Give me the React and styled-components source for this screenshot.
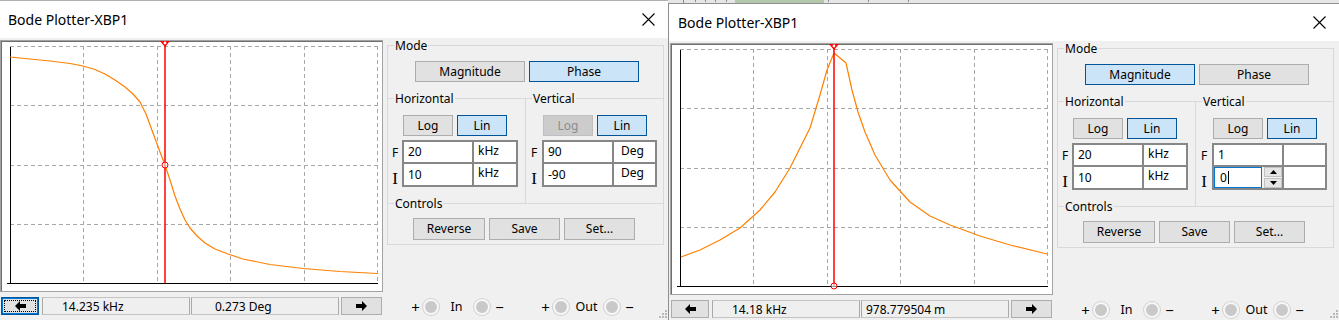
import React from "react";
import styled, { createGlobalStyle } from "styled-components";

const GlobalStyle = createGlobalStyle`
  html, body { margin: 0; padding: 0; background: #ffffff; }
  body { font-family: "Noto Sans", "DejaVu Sans", sans-serif; color: #000; }
  * { box-sizing: border-box; }
`;

const Screen = styled.div`
  display: flex;
  width: 1339px;
  height: 320px;
  overflow: hidden;
  background: #ffffff;
`;

const WindowSlot = styled.div`
  flex: none;
  display: flex;
  flex-direction: column;
  width: ${(p) => p.$w}px;
  height: 320px;
  margin-left: ${(p) => p.$ml || 0}px;
`;

const BackStrip = styled.svg`
  display: block;
  flex: none;
`;

const Window = styled.div`
  position: relative;
  flex: 1;
  display: flex;
  flex-direction: column;
  background: #f0f0f0;
  border-top: 1px solid ${(p) => p.$edge};
  border-left: 1px solid ${(p) => p.$edge};
  overflow: hidden;
`;

const TitleBar = styled.div`
  flex: none;
  height: 37px;
  display: flex;
  align-items: center;
  justify-content: space-between;
  padding: 0 13px 0 9px;
  background: #ffffff;
`;

const Title = styled.span`
  font-size: 14px;
  line-height: 1;
  color: #000;
`;

const Body = styled.div`
  flex: 1;
  display: flex;
  align-items: flex-start;
  padding: 2px 0 0 1px;
`;

const LeftCol = styled.div`
  flex: none;
  width: 383px;
  display: flex;
  flex-direction: column;
`;

const PlotFrame = styled.div`
  width: 383px;
  height: 252px;
  background: #ffffff;
  border: 1px solid #a3a3a3;
  box-shadow: inset 1px 1px 0 #6f6f6f;
`;

const PlotSvg = styled.svg`
  display: block;
`;

const StatusBar = styled.div`
  display: flex;
  height: 18px;
  margin-top: 5px;
  padding-left: 1px;
`;

const StatusField = styled.div`
  width: 148px;
  height: 18px;
  margin-left: ${(p) => p.$ml}px;
  padding-left: ${(p) => p.$pl}px;
  display: flex;
  align-items: center;
  font-size: 12px;
  background: #efefef;
  border: 1px solid #c4c4c4;
  border-left-color: #a9a9a9;
  border-right-color: #a9a9a9;
`;

const Btn = styled.button`
  flex: none;
  width: ${(p) => p.$w}px;
  height: ${(p) => p.$h || 21}px;
  margin: 0 0 0 ${(p) => p.$ml || 0}px;
  padding: 0 0 1px 0;
  display: flex;
  align-items: center;
  justify-content: center;
  font-family: "Noto Sans", "DejaVu Sans", sans-serif;
  font-size: 12px;
  color: ${(p) => (p.$state === "disabled" ? "#8c8c8c" : "#000")};
  background: ${(p) =>
    p.$state === "active" ? "#cce4f7" : p.$state === "disabled" ? "#cccccc" : "#e1e1e1"};
  border: 1px solid
    ${(p) =>
      p.$state === "active" || p.$state === "focus"
        ? "#005499"
        : p.$state === "disabled"
        ? "#bfbfbf"
        : "#adadad"};
  box-shadow: ${(p) => (p.$state === "focus" ? "inset 0 0 0 1px #0078d7" : "none")};
  outline: ${(p) => (p.$state === "focus" ? "1px dotted #000" : "none")};
  outline-offset: -4px;
`;

const RightPanel = styled.div`
  flex: none;
  width: 277px;
  margin-left: 4px;
  padding-top: 5px;
  display: flex;
  flex-direction: column;
`;

const Group = styled.div`
  flex: none;
  width: ${(p) => (p.$w ? `${p.$w}px` : "auto")};
  border-top: 1px solid #d9d9d9;
  border-right: 1px solid #d9d9d9;
  border-left: ${(p) => (p.$noLeft ? "none" : "1px solid #d9d9d9")};
  border-bottom: ${(p) => (p.$bottom ? "1px solid #d9d9d9" : "none")};
  padding-bottom: ${(p) => p.$pb}px;
`;

const Caption = styled.div`
  width: fit-content;
  margin: -8px 0 0 6px;
  padding: 0 1px;
  background: #f0f0f0;
  font-size: 12px;
  line-height: 16px;
`;

const ButtonRow = styled.div`
  display: flex;
  gap: ${(p) => p.$gap || 4}px;
  margin: ${(p) => p.$mt}px 0 0 ${(p) => p.$ml}px;
`;

const HVRow = styled.div`
  display: flex;
`;

const FieldsRow = styled.div`
  display: flex;
  margin-top: 4px;
`;

const LabelCol = styled.div`
  width: ${(p) => p.$w}px;
  display: grid;
  grid-template-rows: 24px 23px;
`;

const FLabel = styled.span`
  display: flex;
  align-items: center;
  justify-content: center;
  font-size: 12px;
`;

const ILabel = styled.span`
  display: flex;
  align-items: flex-end;
  justify-content: center;
  font-family: "Liberation Serif", "DejaVu Serif", serif;
  font-size: 17px;
  line-height: 1;
  padding-bottom: 0;
`;

const FieldGrid = styled.div`
  display: grid;
  grid-template-columns: 68px ${(p) => p.$unit}px;
  grid-template-rows: 20px 21px;
  gap: 2px;
  padding: 2px;
  background: #878787;
`;

const Cell = styled.div`
  background: #ffffff;
  display: flex;
  align-items: ${(p) => (p.$unitCell ? "flex-start" : "center")};
  padding: ${(p) => (p.$unitCell ? "1px" : "0")} 0 0 ${(p) => p.$pl || 4}px;
  font-size: 12px;
  line-height: 16px;
`;

const SpinCell = styled.div`
  display: flex;
  gap: 2px;
  background: #f4f4f4;
`;

const FocusBox = styled.div`
  width: 48px;
  display: flex;
  align-items: center;
  padding-left: 5px;
  background: #ffffff;
  border: 1px solid #0078d7;
  font-size: 12px;
`;

const Caret = styled.span`
  display: inline-block;
  width: 1px;
  height: 13px;
  margin-left: 1px;
  background: #000;
`;

const Spinner = styled.div`
  width: 18px;
  display: flex;
  flex-direction: column;
  gap: 1px;
`;

const SpinBtn = styled.div`
  flex: 1;
  display: flex;
  align-items: center;
  justify-content: center;
  background: #e5e5e5;
  border: 1px solid #c2c2c2;
`;

const TerminalBar = styled.div`
  display: flex;
  align-items: center;
  height: 16px;
  margin-top: 54px;
  padding-left: 24px;
  gap: 37px;
`;

const TermGroup = styled.div`
  display: flex;
  align-items: center;
`;

const Sign = styled.span`
  width: 9px;
  font-size: 15px;
  line-height: 16px;
  text-align: center;
  margin-left: ${(p) => p.$ml || 0}px;
`;

const Dot = styled.span`
  width: 16px;
  height: 16px;
  margin-left: ${(p) => p.$ml || 0}px;
  border-radius: 50%;
  background: #c9c9c9;
  border: 2px solid #f7f7f7;
  box-shadow: 0 0 0 1px #d2d2d2;
`;

const TermLabel = styled.span`
  width: 35px;
  text-align: center;
  font-size: 12.5px;
  line-height: 16px;
`;

const Grip = styled.svg`
  position: absolute;
  right: 1px;
  bottom: 2px;
`;

const CloseIcon = () => (
  <svg width="13" height="13" viewBox="0 0 13 13">
    <path d="M0.5 0.5 L12.5 12.5 M12.5 0.5 L0.5 12.5" stroke="#000" strokeWidth="1.1" />
  </svg>
);

const ArrowIcon = ({ dir }) => (
  <svg width="11" height="10" viewBox="0 0 11 10">
    <path
      d={
        dir === "left"
          ? "M0 5 L5 0 L5 3 L11 3 L11 7 L5 7 L5 10 Z"
          : "M11 5 L6 0 L6 3 L0 3 L0 7 L6 7 L6 10 Z"
      }
      fill="#000"
    />
  </svg>
);

const Tri = ({ up }) => (
  <svg width="7" height="4" viewBox="0 0 7 4">
    <path d={up ? "M0 4 L3.5 0 L7 4 Z" : "M0 0 L7 0 L3.5 4 Z"} fill="#000" />
  </svg>
);

const GripIcon = () => (
  <Grip width="8" height="8" viewBox="0 0 8 8">
    {[
      [6, 0],
      [6, 3],
      [3, 3],
      [6, 6],
      [3, 6],
      [0, 6],
    ].map(([x, y], i) => (
      <rect key={i} x={x} y={y} width="2" height="2" fill="#b8b8b8" />
    ))}
  </Grip>
);

const GX0 = 9;
const GX1 = 376;
const GY0 = 5;
const GY1 = 242;

function Plot({ curve, offset, cursorX, markerY }) {
  const [ox, oy] = offset;
  const pts = curve.map(([x, y]) => `${x - ox},${y - oy}`).join(" ");
  const cols = [1, 2, 3, 4, 5].map((i) => Math.round(GX0 + (i * (GX1 - GX0)) / 5) + 0.5);
  const rows = [0, 1, 2, 3].map((i) => Math.round(GY0 + (i * (GY1 - GY0)) / 4) + 0.5);
  const cx = cursorX - ox;
  const my = markerY - oy;
  return (
    <PlotSvg width="381" height="250" viewBox="0 0 381 250">
      <g stroke="#a8a8a8" strokeWidth="1" strokeDasharray="4 3" shapeRendering="crispEdges">
        {cols.map((x) => (
          <line key={`c${x}`} x1={x} y1={GY0} x2={x} y2={GY1} />
        ))}
        {rows.map((y) => (
          <line key={`r${y}`} x1={GX0} y1={y} x2={GX1} y2={y} />
        ))}
      </g>
      <g stroke="#000" strokeWidth="1" shapeRendering="crispEdges">
        <line x1={GX0 + 0.5} y1={GY0 + 1} x2={GX0 + 0.5} y2={GY1 + 1} />
        <line x1={GX0 - 3} y1={GY1 + 0.5} x2={GX1 + 1} y2={GY1 + 0.5} />
      </g>
      <polyline points={pts} fill="none" stroke="#ff8000" strokeWidth="1.2" strokeLinejoin="round" />
      <line x1={cx} y1={0} x2={cx} y2={GY1} stroke="#ff0000" strokeWidth="1.5" />
      <path d={`M${cx - 5} 0 L${cx + 5} 0 L${cx} 6 Z`} fill="#ff0000" />
      <circle cx={cx} cy={2} r="1.4" fill="#ffffff" />
      <circle cx={cx} cy={my} r="3" fill="#ffffff" fillOpacity="0.6" stroke="#ff0000" strokeWidth="1" />
    </PlotSvg>
  );
}

const LEFT_CURVE = [
  [10, 57], [30, 59], [50, 61], [70, 63.5], [83, 66], [95, 69.5], [105, 74], [115, 80],
  [125, 87], [133, 94], [140, 102], [146, 114], [153, 133], [160, 152], [165, 165],
  [170, 180], [175, 196], [180, 209], [185, 220], [190, 228], [197, 236], [205, 243],
  [215, 249], [228, 254], [243, 259], [270, 264.5], [303, 268.5], [340, 271.5], [377, 273.5],
];

const RIGHT_CURVE = [
  [681, 257], [700, 250], [720, 240], [740, 228], [760, 210], [775, 192], [790, 168],
  [800, 148], [810, 128], [820, 95], [827, 70], [834, 53], [840, 58], [846, 63],
  [852, 90], [858, 112], [865, 132], [875, 155], [890, 180], [910, 202], [930, 216],
  [950, 225], [980, 236], [1010, 245], [1047, 254],
];

function Terminal({ label }) {
  return (
    <TermGroup>
      <Sign>+</Sign>
      <Dot $ml={3} />
      <TermLabel>{label}</TermLabel>
      <Dot />
      <Sign $ml={5}>−</Sign>
    </TermGroup>
  );
}

function BodePlotter({ data }) {
  return (
    <Window $edge={data.edge}>
      <TitleBar>
        <Title>Bode Plotter-XBP1</Title>
        <CloseIcon />
      </TitleBar>
      <Body>
        <LeftCol>
          <PlotFrame>
            <Plot curve={data.curve} offset={data.offset} cursorX={data.cursorX} markerY={data.markerY} />
          </PlotFrame>
          <StatusBar>
            <Btn $w={38} $h={18} $state={data.leftFocus ? "focus" : "normal"}>
              <ArrowIcon dir="left" />
            </Btn>
            <StatusField $ml={3} $pl={data.status[0].pl}>{data.status[0].text}</StatusField>
            <StatusField $ml={1} $pl={data.status[1].pl}>{data.status[1].text}</StatusField>
            <Btn $w={41} $h={18} $ml={2}>
              <ArrowIcon dir="right" />
            </Btn>
          </StatusBar>
        </LeftCol>
        <RightPanel>
          <Group $pb={16}>
            <Caption>Mode</Caption>
            <ButtonRow $mt={7} $ml={27}>
              <Btn $w={110} $state={data.mode === "mag" ? "active" : "normal"}>Magnitude</Btn>
              <Btn $w={110} $state={data.mode === "phase" ? "active" : "normal"}>Phase</Btn>
            </ButtonRow>
          </Group>
          <HVRow>
            <Group $w={139} $pb={16}>
              <Caption>Horizontal</Caption>
              <ButtonRow $mt={8} $ml={15}>
                <Btn $w={50}>Log</Btn>
                <Btn $w={50} $state="active">Lin</Btn>
              </ButtonRow>
              <FieldsRow>
                <LabelCol $w={14}>
                  <FLabel>F</FLabel>
                  <ILabel>I</ILabel>
                </LabelCol>
                <FieldGrid $unit={42}>
                  <Cell>20</Cell>
                  <Cell $unitCell>kHz</Cell>
                  <Cell>10</Cell>
                  <Cell $unitCell>kHz</Cell>
                </FieldGrid>
              </FieldsRow>
            </Group>
            <Group $w={138} $noLeft $pb={16}>
              <Caption>Vertical</Caption>
              <ButtonRow $mt={8} $ml={17}>
                <Btn $w={50} $state={data.vLogDisabled ? "disabled" : "normal"}>Log</Btn>
                <Btn $w={50} $state="active">Lin</Btn>
              </ButtonRow>
              <FieldsRow>
                <LabelCol $w={16}>
                  <FLabel>F</FLabel>
                  <ILabel>I</ILabel>
                </LabelCol>
                <FieldGrid $unit={41}>
                  <Cell>{data.vF}</Cell>
                  <Cell $unitCell $pl={7}>{data.vUnit}</Cell>
                  {data.vSpin ? (
                    <SpinCell>
                      <FocusBox>
                        {data.vI}
                        <Caret />
                      </FocusBox>
                      <Spinner>
                        <SpinBtn>
                          <Tri up />
                        </SpinBtn>
                        <SpinBtn>
                          <Tri />
                        </SpinBtn>
                      </Spinner>
                    </SpinCell>
                  ) : (
                    <Cell>{data.vI}</Cell>
                  )}
                  <Cell $unitCell $pl={7}>{data.vUnit}</Cell>
                </FieldGrid>
              </FieldsRow>
            </Group>
          </HVRow>
          <Group $bottom $pb={4}>
            <Caption>Controls</Caption>
            <ButtonRow $mt={6} $ml={25} $gap={4}>
              <Btn $w={72} $h={22}>Reverse</Btn>
              <Btn $w={71} $h={22}>Save</Btn>
              <Btn $w={71} $h={22}>Set...</Btn>
            </ButtonRow>
          </Group>
          <TerminalBar>
            <Terminal label="In" />
            <Terminal label="Out" />
          </TerminalBar>
        </RightPanel>
      </Body>
      <GripIcon />
    </Window>
  );
}

const LEFT_DATA = {
  edge: "#b0b0b0",
  curve: LEFT_CURVE,
  offset: [1, 41],
  cursorX: 165,
  markerY: 165,
  leftFocus: true,
  status: [
    { text: "14.235 kHz", pl: 19 },
    { text: "0.273 Deg", pl: 23 },
  ],
  mode: "phase",
  vLogDisabled: true,
  vF: "90",
  vI: "-90",
  vUnit: "Deg",
  vSpin: false,
};

const RIGHT_DATA = {
  edge: "#8e8e8e",
  curve: RIGHT_CURVE,
  offset: [671, 44],
  cursorX: 834,
  markerY: 286,
  leftFocus: false,
  status: [
    { text: "14.18 kHz", pl: 19 },
    { text: "978.779504 m", pl: 4 },
  ],
  mode: "mag",
  vLogDisabled: false,
  vF: "1",
  vI: "0",
  vUnit: "",
  vSpin: true,
};

export default function App() {
  return (
    <>
      <GlobalStyle />
      <Screen>
        <WindowSlot $w={670} $ml={-2}>
          <BodePlotter data={LEFT_DATA} />
        </WindowSlot>
        <WindowSlot $w={671}>
          <BackStrip width="671" height="3" viewBox="0 0 671 3">
            <rect x="0" y="0" width="671" height="3" fill="#e6e6e6" />
            <rect x="67" y="0" width="89" height="3" fill="#b3c7ab" />
            <rect x="15" y="0" width="1" height="3" fill="#e07b00" />
            {[27, 37, 47, 58, 160, 200, 240].map((x) => (
              <rect key={x} x={x} y="0" width="1" height="2" fill="#8a8a8a" />
            ))}
          </BackStrip>
          <BodePlotter data={RIGHT_DATA} />
        </WindowSlot>
      </Screen>
    </>
  );
}
